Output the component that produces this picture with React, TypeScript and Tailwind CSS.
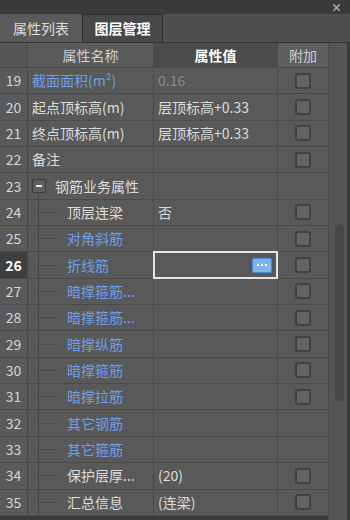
import React from "react";

type Row = {
  n: number;
  name: string;
  value?: string;
  blue?: boolean;
  gray?: boolean;
  check: boolean;
  kind: "plain" | "group" | "child";
  active?: boolean;
};

const rows: Row[] = [
  { n: 19, name: "截面面积(m²)", value: "0.16", blue: true, gray: true, check: true, kind: "plain" },
  { n: 20, name: "起点顶标高(m)", value: "层顶标高+0.33", check: true, kind: "plain" },
  { n: 21, name: "终点顶标高(m)", value: "层顶标高+0.33", check: true, kind: "plain" },
  { n: 22, name: "备注", check: true, kind: "plain" },
  { n: 23, name: "钢筋业务属性", check: false, kind: "group" },
  { n: 24, name: "顶层连梁", value: "否", check: true, kind: "child" },
  { n: 25, name: "对角斜筋", blue: true, check: true, kind: "child" },
  { n: 26, name: "折线筋", blue: true, check: true, kind: "child", active: true },
  { n: 27, name: "暗撑箍筋...", blue: true, check: true, kind: "child" },
  { n: 28, name: "暗撑箍筋...", blue: true, check: true, kind: "child" },
  { n: 29, name: "暗撑纵筋", blue: true, check: true, kind: "child" },
  { n: 30, name: "暗撑箍筋", blue: true, check: true, kind: "child" },
  { n: 31, name: "暗撑拉筋", blue: true, check: true, kind: "child" },
  { n: 32, name: "其它钢筋", blue: true, check: false, kind: "child" },
  { n: 33, name: "其它箍筋", blue: true, check: false, kind: "child" },
  { n: 34, name: "保护层厚...", value: "(20)", check: true, kind: "child" },
  { n: 35, name: "汇总信息", value: "(连梁)", check: true, kind: "child" },
];

const font = { fontFamily: '"Noto Sans CJK SC", "Noto Sans", sans-serif' };

function Checkbox() {
  return <div className="w-[16px] h-[16px] rounded-[3px] border-2 border-[#414141] bg-[#646464]" />;
}

export default function App() {
  return (
    <div
      className="w-[350px] h-[520px] bg-[#3a3a3a] flex flex-col overflow-hidden text-[14px] text-[#dcdcdc]"
      style={font}
    >
      {/* title strip */}
      <div className="h-[14px] flex items-center justify-end pr-[8px] bg-[#3a3a3a]">
        <span className="text-[11px] leading-none text-[#bdbdbd] font-bold">×</span>
      </div>
      {/* tabs */}
      <div className="h-[29px] bg-[#4f4f4f] flex items-end border-b border-[#353535]">
        <div className="w-[82px] h-[28px] bg-[#5a5a5a] flex items-center justify-center text-[#dcdcdc]">
          属性列表
        </div>
        <div className="w-[81px] h-[28px] bg-[#484848] border border-b-0 border-[#2f2f2f] flex items-center justify-center font-bold text-white">
          图层管理
        </div>
      </div>
      {/* body */}
      <div className="flex flex-1 min-h-0">
        <div className="w-[328px] flex flex-col">
          {/* header */}
          <div className="h-[25px] grid grid-cols-[28px_126px_124px_50px] border-b border-[#4a4a4a]">
            <div className="bg-[#565656] border-r border-[#4a4a4a]" />
            <div className="bg-[#5b5b5b] border-r border-[#4a4a4a] flex items-center justify-center text-[#cfcfcf]">
              属性名称
            </div>
            <div className="bg-[#4b4b4b] border-r border-[#4a4a4a] flex items-center justify-center font-bold text-white">
              属性值
            </div>
            <div className="bg-[#5e5e5e] flex items-center justify-center text-[#cfcfcf]">附加</div>
          </div>
          {rows.map((r) => (
            <div
              key={r.n}
              className="h-[26.35px] grid grid-cols-[28px_126px_124px_50px] border-b border-[#4a4a4a] bg-[#595959]"
            >
              <div
                className={
                  r.active
                    ? "bg-[#3e3e3e] border-r border-[#4a4a4a] flex items-center justify-center font-bold text-white"
                    : "bg-[#5a5a5a] border-r border-[#4a4a4a] flex items-center justify-center text-[#d6d6d6]"
                }
              >
                {r.n}
              </div>
              <div className="relative border-r border-[#4a4a4a] flex items-center overflow-hidden whitespace-nowrap">
                {r.kind === "plain" && (
                  <span className={r.blue ? "pl-[4px] text-[#6f9fe8]" : "pl-[4px] text-[#dcdcdc]"}>{r.name}</span>
                )}
                {r.kind === "group" && (
                  <>
                    <div className="absolute left-[10px] top-[19px] bottom-[-1px] w-px bg-[#464646]" />
                    <div className="ml-[4px] w-[14px] h-[14px] rounded-[2px] border border-[#383838] bg-[#5e5e5e] flex items-center justify-center">
                      <div className="w-[6px] h-[1.5px] bg-[#e8e8e8]" />
                    </div>
                    <span className="ml-[9px] text-[#dcdcdc]">{r.name}</span>
                  </>
                )}
                {r.kind === "child" && (
                  <>
                    <div className="absolute left-[10px] top-0 bottom-[-1px] w-px bg-[#464646]" />
                    <div className="absolute left-[11px] w-[19px] h-px bg-[#4a4a4a]" />
                    <span className={r.blue ? "ml-[39px] text-[#6f9fe8]" : "ml-[39px] text-[#dcdcdc]"}>{r.name}</span>
                  </>
                )}
              </div>
              <div className="relative border-r border-[#4a4a4a] flex items-center whitespace-nowrap">
                {r.active ? (
                  <div className="absolute left-[-1px] right-[-1px] top-[-1px] bottom-[-1px] border-2 border-[#e6e6e6] flex items-center justify-end pr-[4px]">
                    <div className="w-[20px] h-[15px] rounded-[2px] border border-[#3f8ee0] bg-[#7fb3ea] flex items-center justify-center gap-[2px]">
                      <div className="w-[2px] h-[2px] bg-white" />
                      <div className="w-[2px] h-[2px] bg-white" />
                      <div className="w-[2px] h-[2px] bg-white" />
                    </div>
                  </div>
                ) : (
                  r.value && (
                    <span className={r.gray ? "pl-[4px] text-[#8a8a8a]" : "pl-[4px] text-[#dcdcdc]"}>{r.value}</span>
                  )
                )}
              </div>
              <div className="flex items-center justify-center">{r.check && <Checkbox />}</div>
            </div>
          ))}
        </div>
        {/* scrollbar */}
        <div className="w-[19px] bg-[#555555] border-l border-[#4a4a4a] relative">
          <div className="absolute left-[6px] w-[9px] top-[181px] h-[177px] rounded-full bg-[#464646]" />
        </div>
        <div className="w-[3px] bg-[#3a3a3a]" />
      </div>
    </div>
  );
}
